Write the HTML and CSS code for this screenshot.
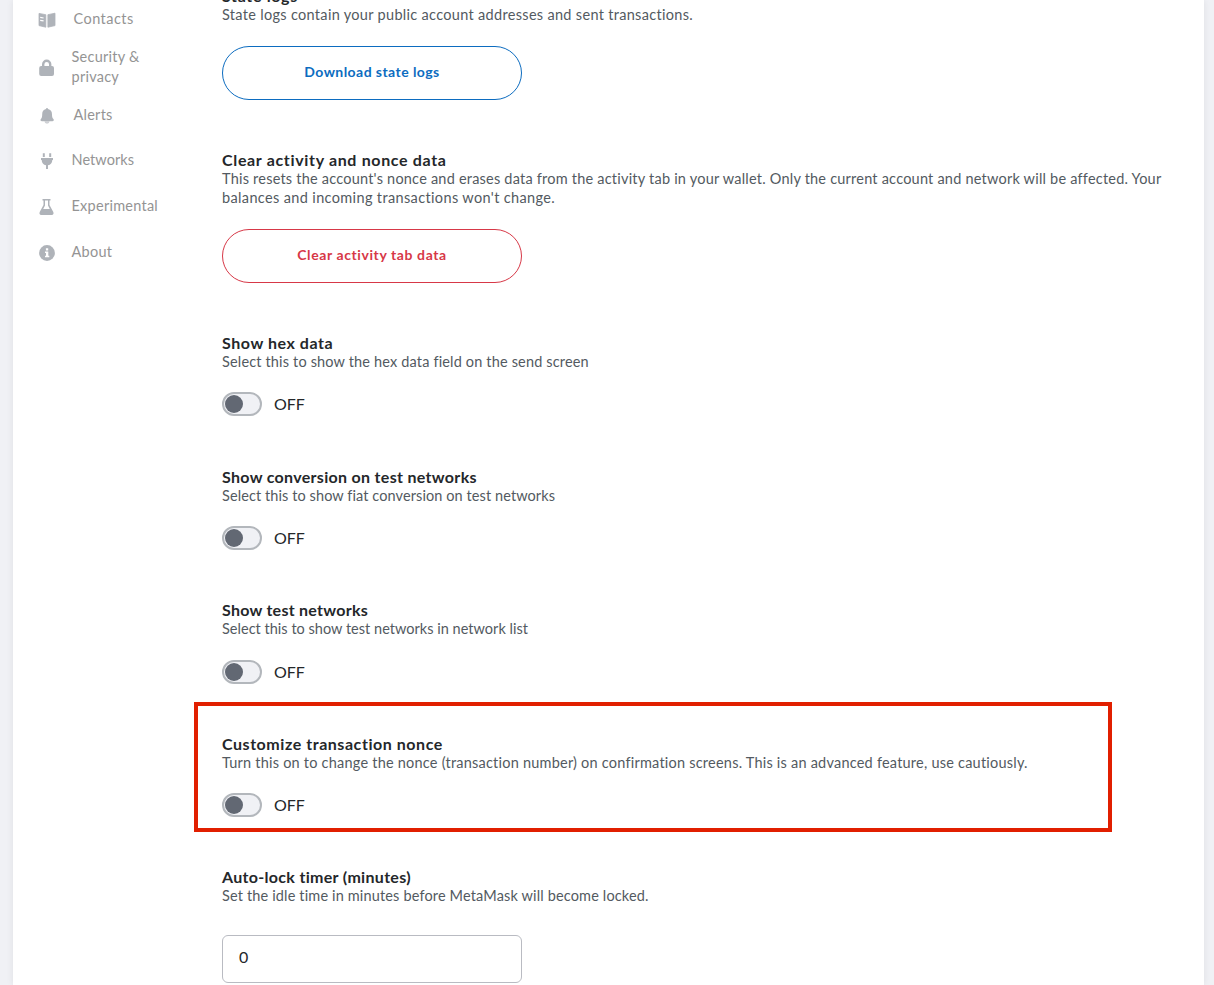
FILE: index.html
```html
<!DOCTYPE html>
<html lang="en">
<head>
<meta charset="utf-8">
<title>Advanced settings</title>
<link rel="stylesheet" href="styles.css">
</head>
<body>
<div class="panel">
  <nav class="nav">
    <a class="nav-item nav-offset"><svg class="icon" viewBox="0 0 18 18"><path d="M1 2.4 7.8 3.7V16.2L1 14.6ZM9.9 3.7 17 2.2V14.6L9.9 16.2Z" stroke="currentColor" stroke-width=".8" stroke-linejoin="round"/><path d="M2.2 6.4 5.6 7M2.2 9.3 5.6 9.9" stroke="#fff" stroke-width="1.2"/></svg><span class="label l-contacts">Contacts</span></a>
    <a class="nav-item tall"><svg class="icon" viewBox="0 0 18 18"><path d="M3.2 7H4V5.300a4.700 4.700 0 0 1 9.400 0V7H14a2 2 0 0 1 2 2v6a2 2 0 0 1-2 2H3.200a2 2 0 0 1-2-2V9a2 2 0 0 1 2-2ZM6.400 7h4.600V5.300a2.300 2.300 0 0 0-4.600 0Z" fill-rule="evenodd"/></svg><span class="label l-security">Security &amp;<br>privacy</span></a>
    <a class="nav-item nav-offset"><svg class="icon" viewBox="0 0 18 18"><path d="M9 1a1 1 0 0 1 1 1c2.700.6 4 2.600 4 5.200 0 2.500.4 3.700 1.400 4.700.9 1.100.3 2.300-1 2.300H4c-1.500 0-2-1.200-1.100-2.300C3.800 10.900 4.200 9.700 4.200 7.200 4.200 4.600 5.400 2.600 8 2a1 1 0 0 1 1-1Z"/><path d="M6.500 14.200h5a2.500 2.500 0 0 1-5 0Z" opacity=".6"/></svg><span class="label l-alerts">Alerts</span></a>
    <a class="nav-item"><svg class="icon" viewBox="0 0 18 18"><path d="M4.800 1.300h2v3.700h-2ZM11.200 1.300h2v3.700h-2ZM3 6h12v2h-.7c0 3-1.700 4.800-4.300 5.300V17H8v-3.700C5.400 12.800 3.700 11 3.700 8H3Z"/></svg><span class="label l-networks">Networks</span></a>
    <a class="nav-item"><svg class="icon" viewBox="0 0 18 18"><path d="M4.500 1h8v1.600h-1V7l3.800 7c.7 1.600 0 3-1.500 3H3.200c-1.500 0-2.200-1.400-1.500-3l3.800-7V2.600h-1ZM7 2.600v5L5.200 11h6.600L10 7.600v-5Z" fill-rule="evenodd"/></svg><span class="label l-experimental">Experimental</span></a>
    <a class="nav-item"><svg class="icon" viewBox="0 0 18 18"><circle cx="9" cy="9" r="7.900"/><path d="M7.900 4.300h2.300v2.100H7.900ZM7 7.500h3.300v4.300h1V13.300H7v-1.500h1V9H7Z" fill="#fff"/></svg><span class="label l-about">About</span></a>
  </nav>
  <main class="content">
    <section class="section">
      <h2 class="title t-logs">State logs</h2>
      <p class="desc d-logs">State logs contain your public account addresses and sent transactions.</p>
      <button class="button primary">Download state logs</button>
    </section>
    <section class="section">
      <h2 class="title t-clear">Clear activity and nonce data</h2>
      <p class="desc"><span class="d-clear-a">This resets the account's nonce and erases data from the activity tab in your wallet. Only the current account and network will be affected. Your</span><br><span class="d-clear-b">balances and incoming transactions won't change.</span></p>
      <button class="button danger">Clear activity tab data</button>
    </section>
    <section class="section">
      <h2 class="title t-hex">Show hex data</h2>
      <p class="desc d-hex">Select this to show the hex data field on the send screen</p>
      <div class="toggle-row"><span class="toggle"></span><span class="state">OFF</span></div>
    </section>
    <section class="section">
      <h2 class="title t-conversion">Show conversion on test networks</h2>
      <p class="desc d-conversion">Select this to show fiat conversion on test networks</p>
      <div class="toggle-row"><span class="toggle"></span><span class="state">OFF</span></div>
    </section>
    <section class="section">
      <h2 class="title t-test">Show test networks</h2>
      <p class="desc d-test">Select this to show test networks in network list</p>
      <div class="toggle-row"><span class="toggle"></span><span class="state">OFF</span></div>
    </section>
    <section class="section highlighted">
      <h2 class="title t-nonce">Customize transaction nonce</h2>
      <p class="desc d-nonce">Turn this on to change the nonce (transaction number) on confirmation screens. This is an advanced feature, use cautiously.</p>
      <div class="toggle-row"><span class="toggle"></span><span class="state">OFF</span></div>
    </section>
    <section class="section">
      <h2 class="title t-lock">Auto-lock timer (minutes)</h2>
      <p class="desc d-lock">Set the idle time in minutes before MetaMask will become locked.</p>
      <div class="field">0</div>
    </section>
  </main>
</div>
</body>
</html>
```
FILE: styles.css
```css
*, *::before, *::after { box-sizing: border-box; }
body {
  margin: 0;
  height: 985px;
  overflow: hidden;
  background: #f0f1f5;
  color: #24272a;
  font-family: Lato, "Liberation Sans", sans-serif;
  font-variant-ligatures: none;
}
.panel {
  display: flex;
  width: 1191px;
  height: 985px;
  margin-left: 13px;
  overflow: hidden;
  background: #fff;
  box-shadow: 0 0 7px rgba(0, 0, 0, .08);
}
.nav { width: 209px; flex: none; margin-top: -3.5px; padding-left: 24.5px; }
.nav-item { display: flex; align-items: center; height: 45.6px; gap: 16px; color: #949494; font-size: 14.5px; line-height: 20px; }
.tall { height: 50px; }
.nav-offset .label { margin-left: 2px; }
.icon { width: 18px; height: 18px; flex: none; margin-top: 2px; fill: currentColor; color: #afb3b9; }
.label { letter-spacing: .25px; }
.l-contacts { letter-spacing: .45px; }
.l-networks { letter-spacing: .05px; }
.content { flex: none; width: 960px; margin-top: -13.4px; }
.section { position: relative; margin-bottom: 51.2px; }
.title { margin: 0 0 1px; font-size: 16px; line-height: 17px; font-weight: 700; }
.desc { margin: 0; font-size: 14.5px; line-height: 19px; color: #535a61; white-space: nowrap; }
.t-logs, .t-clear { letter-spacing: .66px; }
.t-hex { letter-spacing: .55px; }
.t-conversion { letter-spacing: .31px; }
.t-test { letter-spacing: .26px; }
.t-nonce { letter-spacing: .55px; }
.t-lock { letter-spacing: .31px; }
.d-logs { letter-spacing: .31px; }
.d-clear-a { letter-spacing: .215px; }
.d-clear-b { letter-spacing: .36px; }
.d-hex { letter-spacing: .16px; }
.d-conversion { letter-spacing: .09px; }
.d-test { letter-spacing: .02px; }
.d-nonce { letter-spacing: .22px; }
.d-lock { letter-spacing: .15px; }
.button { display: block; width: 300px; height: 54px; margin-top: 22px; padding: 0 0 2px; border: 1px solid; border-radius: 27px; background: #fff; font: 700 14px/20px Lato, sans-serif; }
.primary { color: #0c6cc0; letter-spacing: .44px; }
.danger { color: #d73847; letter-spacing: .6px; }
.toggle-row { display: flex; align-items: center; gap: 12px; height: 24px; margin-top: 21.4px; }
.toggle { display: flex; align-items: center; width: 40px; height: 24px; padding-left: 1px; border: 2px solid #b3b7bc; border-radius: 12px; background: #f0f1f5; }
.toggle::before { content: ""; width: 18px; height: 18px; border-radius: 50%; background: #626873; }
.state { font-size: 16px; line-height: 20px; }
.highlighted::after { content: ""; position: absolute; left: -28px; top: -32.8px; width: 918px; height: 130px; border: 4px solid #e11f00; }
.field { width: 300px; height: 48px; margin-top: 30px; padding: 10px 16px; border: 1px solid #b9bbc2; border-radius: 6px; font-size: 16px; line-height: 22px; }
```
